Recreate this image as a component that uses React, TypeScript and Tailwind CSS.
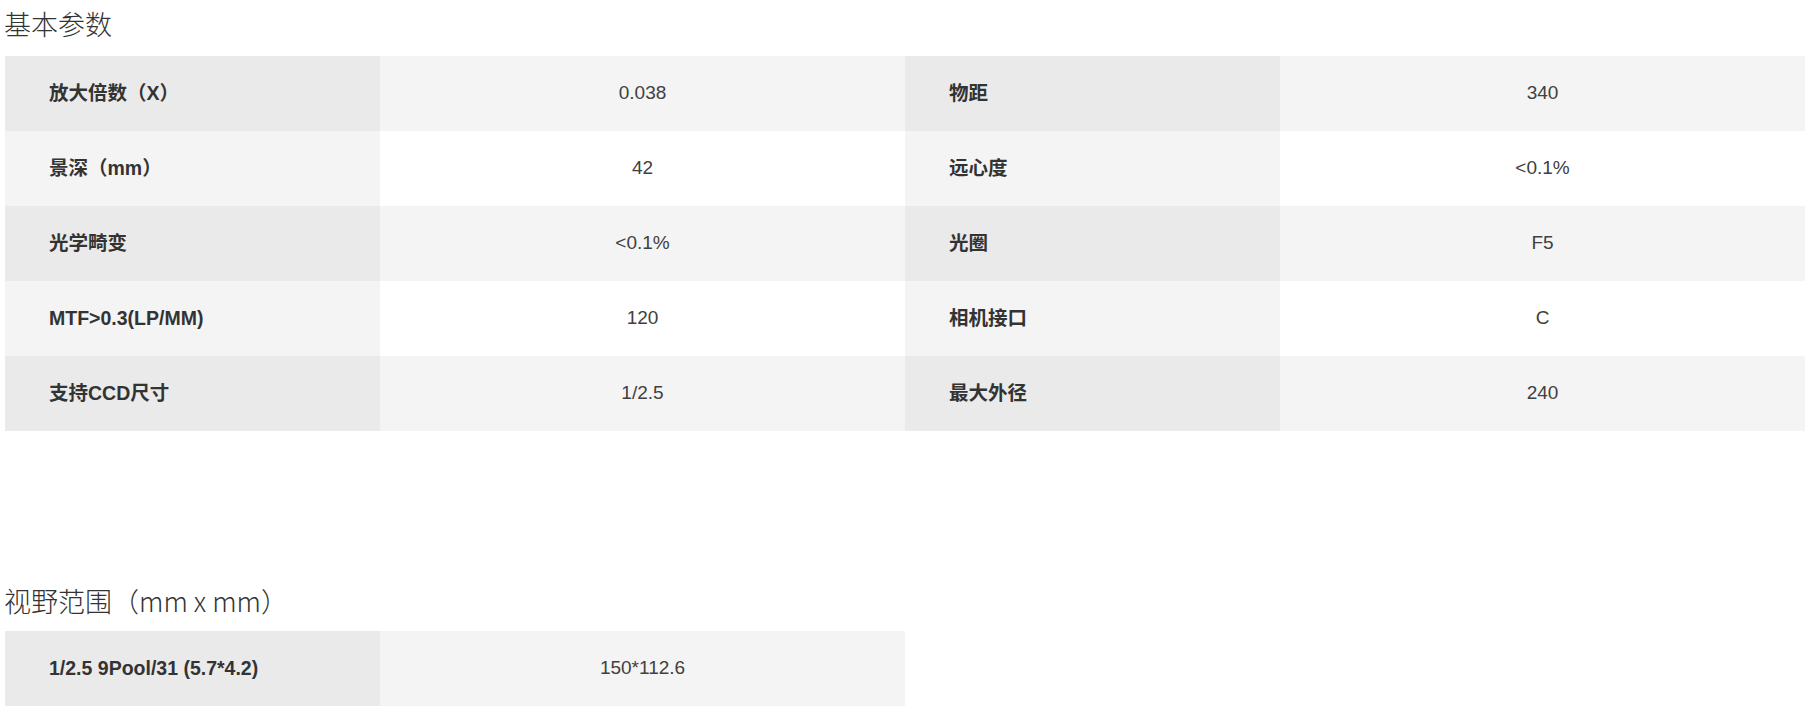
import React from "react";

const rows: [string, string, string, string][] = [
  ["放大倍数（X）", "0.038", "物距", "340"],
  ["景深（mm）", "42", "远心度", "<0.1%"],
  ["光学畸变", "<0.1%", "光圈", "F5"],
  ["MTF>0.3(LP/MM)", "120", "相机接口", "C"],
  ["支持CCD尺寸", "1/2.5", "最大外径", "240"],
];

const font = { fontFamily: '"Liberation Sans", "Noto Sans CJK SC", sans-serif' };

function Label({ text, odd }: { text: string; odd: boolean }) {
  return (
    <div
      className={`h-[75px] flex items-center pl-[44px] text-[19.5px] font-bold text-[#333] ${
        odd ? "bg-[#eaeaea]" : "bg-[#f4f4f4]"
      }`}
    >
      {text}
    </div>
  );
}

function Value({ text, odd }: { text: string; odd: boolean }) {
  return (
    <div
      className={`h-[75px] flex items-center justify-center text-[19px] text-[#404040] ${
        odd ? "bg-[#f4f4f4]" : "bg-white"
      }`}
    >
      {text}
    </div>
  );
}

function Title({ children }: { children: React.ReactNode }) {
  return (
    <h2
      className="text-[27px] font-light leading-[36px] text-[#333] pl-[4px]"
      style={{ fontFamily: '"Noto Sans CJK SC", sans-serif' }}
    >
      {children}
    </h2>
  );
}

export default function App() {
  return (
    <div className="bg-white min-h-[708px] pt-[6px]" style={font}>
      <Title>基本参数</Title>
      <div className="ml-[5px] mt-[14px] w-[1800px] grid grid-cols-[375px_525px_375px_525px]">
        {rows.map((r, i) => {
          const odd = i % 2 === 0;
          return (
            <React.Fragment key={i}>
              <Label text={r[0]} odd={odd} />
              <Value text={r[1]} odd={odd} />
              <Label text={r[2]} odd={odd} />
              <Value text={r[3]} odd={odd} />
            </React.Fragment>
          );
        })}
      </div>

      <div className="mt-[152px]">
        <Title>视野范围（mm x mm）</Title>
      </div>
      <div className="ml-[5px] mt-[12px] w-[900px] grid grid-cols-[375px_525px]">
        <Label text="1/2.5 9Pool/31 (5.7*4.2)" odd />
        <Value text="150*112.6" odd />
      </div>
    </div>
  );
}
